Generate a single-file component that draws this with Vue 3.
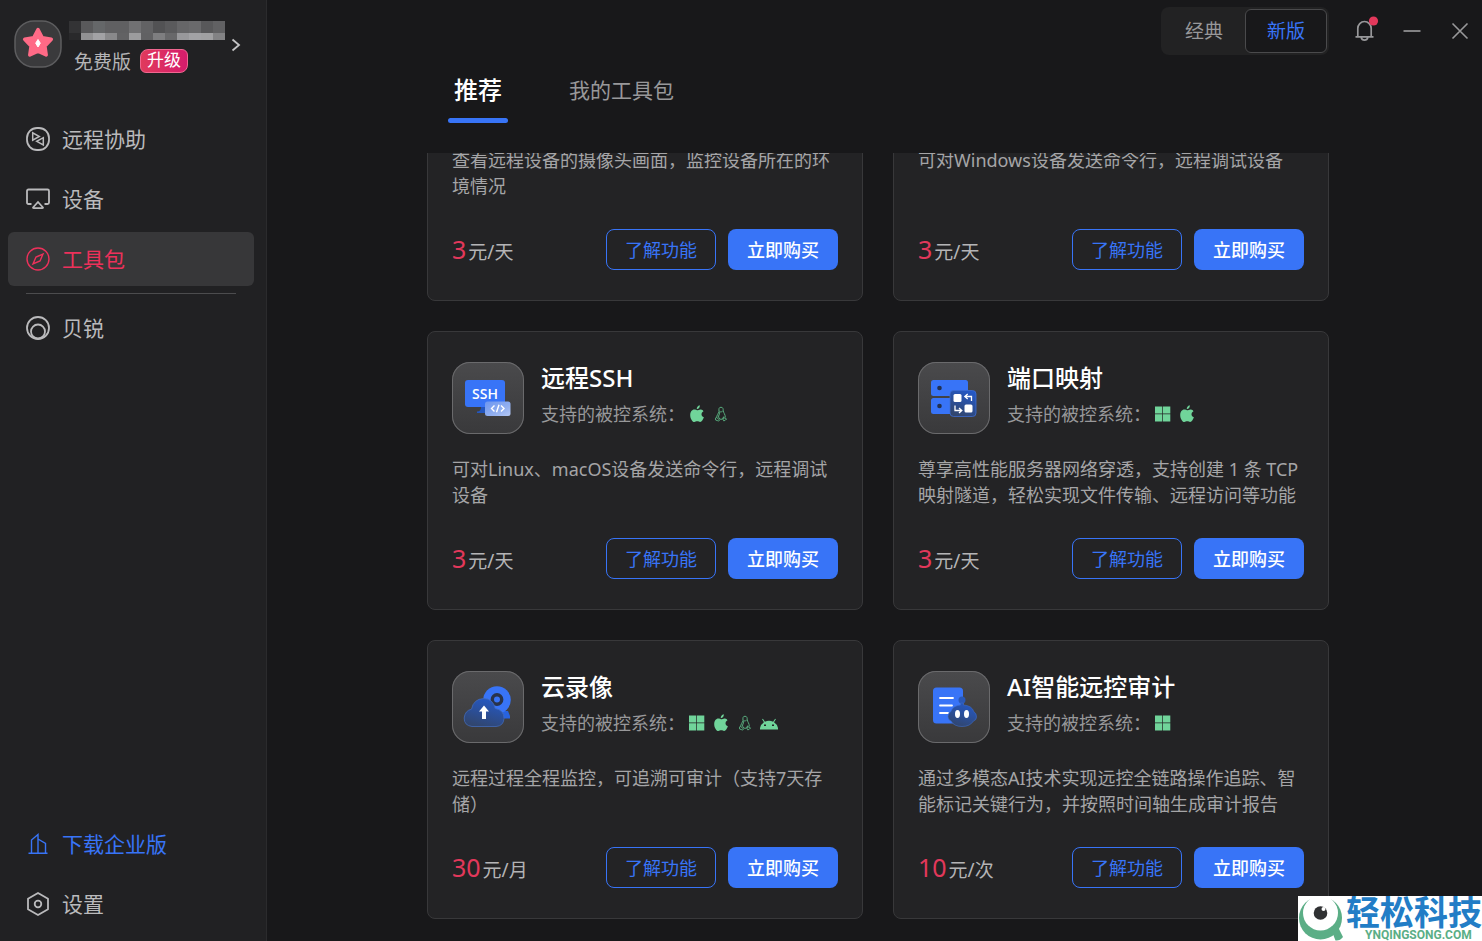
<script setup>
import { ref, onMounted } from 'vue'

const mosaic = [
  ['#333335', '#59595b', '#656769', '#606062', '#606062', '#717173', '#626264', '#525254', '#5a5a5c', '#666668', '#6a6a6c', '#58585a', '#616163'],
  ['#29292b', '#919193', '#a2a2a5', '#89898b', '#626264', '#9c9c9e', '#616163', '#7e7e80', '#68686a', '#98989b', '#a2a2a5', '#a0a0a2', '#828284'],
]

const cards = [
  { id: 'camera', desc: '查看远程设备的摄像头画面，监控设备所在的环境情况', price: '3', unit: '元/天' },
  { id: 'cmd', desc: '可对Windows设备发送命令行，远程调试设备', price: '3', unit: '元/天' },
  { id: 'ssh', title: '远程SSH', systems: ['apple', 'linux'], desc: '可对Linux、macOS设备发送命令行，远程调试设备', price: '3', unit: '元/天' },
  { id: 'port', title: '端口映射', systems: ['windows', 'apple'], desc: '尊享高性能服务器网络穿透，支持创建 1 条 TCP 映射隧道，轻松实现文件传输、远程访问等功能', price: '3', unit: '元/天' },
  { id: 'cloud', title: '云录像', systems: ['windows', 'apple', 'linux', 'android'], desc: '远程过程全程监控，可追溯可审计（支持7天存储）', price: '30', unit: '元/月' },
  { id: 'audit', title: 'AI智能远控审计', systems: ['windows'], desc: '通过多模态AI技术实现远控全链路操作追踪、智能标记关键行为，并按照时间轴生成审计报告', price: '10', unit: '元/次' },
]

const scroller = ref(null)
onMounted(() => {
  scroller.value.scrollTop = scroller.value.scrollHeight
})
</script>

<template>
  <div class="app">
    <aside class="sidebar">
      <div class="profile">
        <svg class="avatar" viewBox="0 0 48 48" aria-hidden="true">
          <rect x="1" y="1" width="46" height="46" rx="19" fill="#3a3a3c" stroke="#5d5d5f" stroke-width="1.5" />
          <path d="M24 9.500L28.300 17.700L37.300 19.300L30.900 26L32.200 35L24 31.100L15.800 35L17.100 26L10.700 19.300L19.700 17.700Z" fill="#ff6a86" stroke="#ff6a86" stroke-width="3.500" stroke-linejoin="round" />
          <path d="M24 19.500L26.300 23.200L24 27L21.700 23.200Z" fill="#fff" stroke="#fff" stroke-linejoin="round" />
        </svg>
        <div class="who">
          <svg class="mosaic" viewBox="0 0 156 19" shape-rendering="crispEdges" aria-hidden="true">
            <g v-for="(row, r) in mosaic" :key="r">
              <rect v-for="(c, i) in row" :key="i" :x="i * 12" :y="r * 12" width="12" :height="r ? 7 : 12" :fill="c" />
            </g>
          </svg>
          <div class="plan">
            <span>免费版</span>
            <button class="upgrade" type="button">升级</button>
          </div>
        </div>
        <button class="plain arrow" type="button" aria-label="账号">
          <svg width="10" height="14" viewBox="0 0 10 14" fill="none" stroke="#c4c4c6" stroke-width="1.800"><path d="M1.500 1.500L8 7L1.500 12.500" /></svg>
        </button>
      </div>

      <nav class="nav">
        <a href="#">
          <svg class="ico" viewBox="0 0 24 24">
            <rect x="1" y="1" width="22" height="22" rx="10" />
            <path d="M6.700 5.800V13.200L13.300 9.500Z M17.300 10.700V18L10.700 14.300Z" stroke-width="1.500" />
          </svg>
          <span>远程协助</span>
        </a>
        <a href="#">
          <svg class="ico" viewBox="0 0 24 24">
            <path d="M5.500 17H2.500Q1 17 1 15.500V4Q1 2.500 2.500 2.500H21.500Q23 2.500 23 4V15.500Q23 17 21.500 17H18.500M12 15L17 20.500Q17 21.200 16 21.200H8Q7 21.200 7 20.500Z" />
          </svg>
          <span>设备</span>
        </a>
        <a href="#" class="active" aria-current="page">
          <svg class="ico thin" viewBox="0 0 24 24">
            <circle cx="12" cy="12" r="11" />
            <path d="M17 7L14 14L7 17L10 10Z" />
          </svg>
          <span>工具包</span>
        </a>
      </nav>
      <hr class="rule" />
      <nav class="nav">
        <a href="#">
          <svg class="ico" viewBox="0 0 24 24">
            <circle cx="12" cy="12" r="11" /><circle cx="12" cy="15.500" r="7" />
          </svg>
          <span>贝锐</span>
        </a>
      </nav>
      <nav class="nav foot">
        <a href="#" class="download">
          <svg class="ico thin" viewBox="0 0 24 24">
            <path d="M2.500 21.200H21.500M5.500 21V8L12 2.500V21M12 7L19.500 11.500V21" />
          </svg>
          <span>下载企业版</span>
        </a>
        <a href="#">
          <svg class="ico" viewBox="0 0 24 24">
            <path d="M12 1L22 6.800V17.200L12 23L2 17.200V6.800Z" stroke-linejoin="round" /><circle cx="12" cy="12" r="3.300" />
          </svg>
          <span>设置</span>
        </a>
      </nav>
    </aside>

    <main class="main">
      <header class="top">
        <div class="switch">
          <button type="button">经典</button>
          <button type="button" class="on">新版</button>
        </div>
        <button class="plain bell" type="button" aria-label="通知">
          <svg width="30" height="30" viewBox="0 0 30 30" fill="none" stroke="#98989a" stroke-width="1.700">
            <path d="M4.500 21.800H22.500M6.800 21.500V13.500A6.700 7 0 0 1 20.200 13.500V21.500M10.200 22.500A3.400 3.400 0 0 0 16.800 22.500" />
            <circle cx="22.500" cy="6" r="4.600" fill="#e2385b" stroke="none" />
          </svg>
        </button>
        <button class="plain" type="button" aria-label="最小化">
          <svg width="18" height="18" viewBox="0 0 18 18" stroke="#8e8e90" stroke-width="1.800"><path d="M0.500 9H17.500" /></svg>
        </button>
        <button class="plain" type="button" aria-label="关闭">
          <svg width="18" height="18" viewBox="0 0 18 18" stroke="#98989a" stroke-width="1.600"><path d="M1.500 1.500L16.500 16.500M16.500 1.500L1.500 16.500" /></svg>
        </button>
      </header>

      <nav class="tabs">
        <a href="#" class="current">推荐</a>
        <a href="#">我的工具包</a>
      </nav>

      <section ref="scroller" class="scroller">
        <div class="grid">
          <article v-for="card in cards" :key="card.id" class="card">
            <div v-if="card.title" class="head">
              <div class="tile">
                <svg v-if="card.id === 'ssh'" viewBox="0 0 72 72">
                  <rect x="13" y="18" width="40" height="27" rx="3" fill="#3874f7" />
                  <path d="M29 45H39V51H25V49.500Q29 49.500 29 45Z" fill="#2456bd" />
                  <text x="33" y="37" text-anchor="middle" class="ssh">SSH</text>
                  <rect x="33" y="39.500" width="25.500" height="14.500" rx="2.500" fill="url(#glassLight)" />
                  <path d="M42.500 43.500L39.500 46.500L42.500 49.500M49 43.500L52 46.500L49 49.500M47 42.800L44.500 50.200" fill="none" stroke="#fff" stroke-width="1.400" />
                </svg>
                <svg v-else-if="card.id === 'port'" viewBox="0 0 72 72">
                  <rect x="13" y="18" width="37" height="16" rx="2.500" fill="#3874f7" />
                  <rect x="13" y="36" width="37" height="16" rx="2.500" fill="#3874f7" />
                  <circle cx="21.500" cy="26" r="2.300" fill="#22304f" /><circle cx="21.500" cy="44" r="2.300" fill="#22304f" />
                  <rect x="32" y="28.500" width="26" height="26" rx="3.500" fill="url(#glassDark)" stroke="#3d6cd0" stroke-width=".8" />
                  <rect x="35.500" y="32" width="8" height="8" rx="1.500" fill="#fff" />
                  <rect x="46.500" y="42.500" width="8" height="8" rx="1.500" fill="#fff" />
                  <path d="M53.500 39V34.500H47.500M49.700 32L46.800 34.500L49.700 37M37 43.500V48.500H43M41 46L43.800 48.500L41 51" fill="none" stroke="#fff" stroke-width="1.300" />
                </svg>
                <svg v-else-if="card.id === 'cloud'" viewBox="0 0 72 72">
                  <path d="M35 47.500H58V45L56 40H40Z" fill="#2863df" />
                  <circle cx="45" cy="29" r="13.800" fill="#3874f7" />
                  <circle cx="45" cy="28.500" r="4.700" fill="none" stroke="#29334b" stroke-width="3.400" />
                  <path d="M20 55.500Q12 54.500 12.200 47Q13 39.500 19.500 38.200Q21.500 28 31.500 27.500Q41 27.500 43.200 37.500Q52 39 52 47.500Q51.500 55 44 55.500Z" fill="url(#glassDark)" stroke="#4169b8" stroke-width=".8" />
                  <path d="M32 34.500L37 40.500H34V48H30V40.500H27Z" fill="#fff" />
                </svg>
                <svg v-else viewBox="0 0 72 72">
                  <rect x="15" y="16.500" width="30" height="36" rx="3.500" fill="#3874f7" />
                  <path d="M22 27H35M22 34.500H34M22 42H30" stroke="#fff" stroke-width="1.800" stroke-linecap="round" />
                  <circle cx="44" cy="29" r="3.500" fill="#2a58b6" />
                  <path d="M42.500 32H45.500V34Q54 34.500 56 41Q58.500 42 58.500 46Q58.500 49 55.500 50Q52 55.500 44 55.500Q36 55.500 33 50Q30 48.500 30 45.500Q30 42 32.500 41Q35 34.500 42.500 34Z" fill="url(#glassDark)" stroke="#3d6cc8" stroke-width=".6" />
                  <ellipse cx="39.500" cy="43" rx="2.500" ry="4" fill="#fff" /><ellipse cx="48.500" cy="43" rx="2.500" ry="4" fill="#fff" />
                </svg>
              </div>
              <div class="meta">
                <h2>{{ card.title }}</h2>
                <div class="support">
                  <span>支持的被控系统：</span>
                  <template v-for="s in card.systems" :key="s">
                    <svg v-if="s === 'windows'" class="os" viewBox="0 0 18 18"><path d="M1 1.500H8.300V8.500H1ZM9 1.500H16.300V8.500H9ZM1 9.300H8.300V16.500H1ZM9 9.300H16.300V16.500H9Z" /></svg>
                    <svg v-else-if="s === 'apple'" class="os" viewBox="0 0 18 18"><path d="M11.800 .3Q12 3.800 8.700 4.300Q8.700 1.200 11.800 .3ZM9 5.300C10.500 5.300 11.200 4.300 12.900 4.500Q14.800 4.800 15.500 6.200C12.500 8 13.200 11.200 15.900 12.300C14.900 14.800 13.800 17 12.200 17C11 17 10.600 16.300 9.300 16.300C8 16.300 7.400 17 6.300 17C4.300 17 2.200 13.400 2.200 10.200C2.200 6.900 4 4.600 6.300 4.600C7.600 4.600 8.300 5.300 9 5.300Z" /></svg>
                    <svg v-else-if="s === 'linux'" class="os line" viewBox="-1 -1 20 20"><path d="M6.800 6.500C6.500 3.500 6.500 1.500 9 1.500C11.500 1.500 11.500 4 11.500 5.500C11.600 7.500 14 9.500 13.800 13M6.800 6.500C6 8.500 4.200 10.500 4.200 13M7.300 6C9 7 9 7 10.800 5.800M7.500 7C7.500 10 6 10.500 6.300 12.500L8 14.800H10.500L12 12M4.200 12.800L7.500 15.800Q6.500 17.200 5.500 16.500L3 15.700V13.300ZM12 12.500Q13.500 14.500 15.200 14.500L13.500 16.200Q11.500 17.500 11.300 15Z" /></svg>
                    <svg v-else class="os" viewBox="1 0 18 18"><path fill-rule="evenodd" d="M.8 15.500Q1.200 10.500 5 8.200L3.100 5.300L3.900 4.800L5.900 7.700Q10 6 14.100 7.700L16.100 4.800L16.900 5.300L15 8.200Q18.800 10.500 19.200 15.500ZM5 12H7V10.500H5ZM13 12H15V10.500H13Z" /></svg>
                  </template>
                </div>
              </div>
            </div>
            <p class="desc">{{ card.desc }}</p>
            <div class="bottom">
              <div class="price"><strong>{{ card.price }}</strong><span>{{ card.unit }}</span></div>
              <button type="button" class="btn ghost">了解功能</button>
              <button type="button" class="btn solid">立即购买</button>
            </div>
          </article>
        </div>
      </section>
    </main>

    <div class="brand">
      <svg width="48" height="45" viewBox="0 0 48 45" aria-hidden="true">
        <circle cx="22.500" cy="22" r="21.500" fill="#5bae86" />
        <path d="M33 33L39 29L45 41Q42 45 37.500 44.500Z" fill="#5bae86" />
        <circle cx="22.500" cy="17" r="17.500" fill="#fff" />
        <circle cx="22.500" cy="17" r="6.800" fill="#303133" /><circle cx="25.500" cy="13" r="2" fill="#fff" />
      </svg>
      <div class="words"><b>轻松科技</b><small>YNQINGSONG.COM</small></div>
    </div>

    <svg class="defs" width="0" height="0" aria-hidden="true">
      <defs>
        <linearGradient id="glassLight" x1="0" y1="0" x2="1" y2="1"><stop offset="0" stop-color="#6c96f0" /><stop offset=".6" stop-color="#91aff0" /><stop offset="1" stop-color="#b5c8f3" /></linearGradient>
        <linearGradient id="glassDark" x1=".8" y1="0" x2=".4" y2="1"><stop offset="0" stop-color="#2459c9" /><stop offset="1" stop-color="#31466f" /></linearGradient>
      </defs>
    </svg>
  </div>
</template>

<style>
body {
  background: #18181a;
}
</style>

<style scoped>
.app {
  position: relative;
  display: flex;
  height: 100vh;
  overflow: hidden;
  background: #18181a;
  color: #b4b4b6;
  font-family: "Noto Sans", "Noto Sans CJK SC", sans-serif;
  font-size: 18px;
}
* {
  box-sizing: border-box;
}
a {
  color: inherit;
  text-decoration: none;
}
button {
  font: inherit;
  color: inherit;
  padding: 0 0 2px;
  border: 0;
  background: none;
  cursor: pointer;
}
svg {
  display: block;
  flex: none;
}
.plain {
  display: flex;
  align-items: center;
  padding: 0;
}
.sidebar {
  flex: none;
  width: 267px;
  display: flex;
  flex-direction: column;
  padding: 20px 12px 10px 8px;
  background: #212123;
  border-right: 1px solid #2b2b2d;
}
.profile {
  display: flex;
  height: 92px;
  padding-left: 6px;
}
.avatar {
  width: 48px;
  height: 48px;
}
.who {
  margin-left: 7px;
  padding-top: 1px;
}
.mosaic {
  width: 156px;
  height: 19px;
}
.plan {
  display: flex;
  align-items: center;
  gap: 9px;
  height: 24px;
  margin-top: 9px;
  padding-left: 5px;
  line-height: 24px;
  font-size: 19px;
}
.plan span {
  padding-top: 2px;
}
.upgrade {
  width: 48px;
  height: 24px;
  border: 1px solid #ef6790;
  border-radius: 8px 6px;
  background: linear-gradient(90deg, #e03a5c, #d61c6c);
  color: #fff;
  font-size: 17px;
  line-height: 20px;
}
.arrow {
  height: 50px;
  margin-left: 6px;
}
.nav {
  display: flex;
  flex-direction: column;
  gap: 6px;
}
.nav a {
  display: flex;
  align-items: center;
  gap: 12px;
  height: 54px;
  padding-left: 18px;
  border-radius: 6px;
  font-size: 21px;
  color: #bababc;
}
.nav span {
  padding-bottom: 2px;
}
.nav a.active {
  background: #373739;
  color: #ed315b;
}
.nav a.download {
  color: #3874f7;
}
.ico {
  width: 24px;
  height: 24px;
  fill: none;
  stroke: currentColor;
  stroke-width: 1.8;
}
.ico.thin {
  stroke-width: 1.4;
}
.rule {
  width: 210px;
  height: 1px;
  margin: 7px 0 7px 18px;
  border: 0;
  background: #4c4c4e;
}
.foot {
  margin-top: auto;
}
.main {
  flex: 1;
  min-width: 0;
  display: flex;
  flex-direction: column;
}
.top {
  display: flex;
  justify-content: flex-end;
  align-items: center;
  gap: 30px;
  padding: 7px 13px 0 0;
}
.switch {
  display: flex;
  padding: 2px;
  border-radius: 8px;
  background: #222223;
}
.switch button {
  width: 82px;
  height: 44px;
  font-size: 19px;
  color: #98989a;
  border-radius: 6px;
}
.switch .on {
  border: 1px solid #4a4a4c;
  background: #18181a;
  color: #3874f7;
}
.bell {
  height: 32px;
  align-items: flex-start;
  margin: 0 -8px;
}
.tabs {
  display: flex;
  gap: 61px;
  height: 98px;
  padding: 17px 0 0 181px;
}
.tabs a {
  line-height: 36px;
  font-size: 21px;
  color: #98989a;
}
.tabs .current {
  width: 60px;
  text-align: center;
  color: #fff;
  font-size: 24px;
  font-weight: 500;
}
.tabs .current::after {
  content: "";
  display: block;
  height: 5px;
  margin-top: 10px;
  border-radius: 3px;
  background: #3874f7;
}
.scroller {
  flex: 1;
  min-height: 0;
  overflow-y: auto;
  scrollbar-width: none;
}
.grid {
  display: grid;
  grid-template-columns: 1fr 1fr;
  gap: 30px;
  padding: 0 153px 22px 160px;
}
.card {
  display: flex;
  flex-direction: column;
  justify-content: flex-end;
  min-height: 279px;
  padding: 30px 24px;
  border: 1px solid #38383a;
  border-radius: 8px;
  background: #232325;
}
.head {
  display: flex;
  gap: 17px;
  margin-bottom: 22px;
}
.tile {
  flex: none;
  width: 72px;
  height: 72px;
  border-radius: 18px;
  background: linear-gradient(#4a4a4c, #39393b);
  box-shadow: inset 0 0 0 1px #6a6a6c;
}
.ssh {
  font: 600 14px "Open Sans", sans-serif;
  fill: #fff;
}
h2 {
  margin: 0;
  font-size: 24px;
  font-weight: 500;
  line-height: 32px;
  color: #fff;
}
.support {
  display: flex;
  align-items: center;
  gap: 6px;
  height: 40px;
  color: #98989a;
}
.support span {
  margin-right: -3px;
  padding-bottom: 2px;
}
.os {
  width: 18px;
  height: 18px;
  fill: #70d49a;
}
.os.line {
  fill: none;
  stroke: #58ac7d;
  stroke-width: 1.1;
}
.desc {
  min-height: 52px;
  margin: 0 0 30px;
  line-height: 26px;
  color: #a5a5a7;
}
.bottom {
  display: flex;
  align-items: center;
  gap: 12px;
}
.price {
  display: flex;
  align-items: baseline;
  gap: 2px;
  margin-right: auto;
  padding-bottom: 2px;
}
.price strong {
  font-size: 25px;
  line-height: 36px;
  font-weight: 400;
  color: #e2385b;
}
.price span {
  font-size: 19px;
}
.btn {
  width: 110px;
  height: 41px;
  border-radius: 8px;
}
.btn.ghost {
  border: 1px solid #3874f7;
  color: #3874f7;
}
.btn.solid {
  background: #3874f7;
  color: #fff;
  font-weight: 500;
}
.brand {
  position: absolute;
  right: 0;
  bottom: 0;
  display: flex;
  width: 184px;
  height: 45px;
  overflow: hidden;
  background: #fff;
}
.words {
  display: flex;
  flex-direction: column;
  white-space: nowrap;
}
.words b {
  font-size: 34px;
  line-height: 33px;
  color: #227dc6;
}
.words small {
  margin-left: 19px;
  font: bold 12px/12px Roboto, sans-serif;
  color: #5bae86;
}
.defs {
  position: absolute;
}
</style>
